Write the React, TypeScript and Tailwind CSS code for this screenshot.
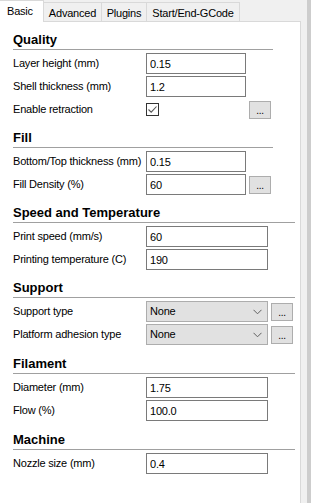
import React from 'react';

type Row =
  | { kind: 'text'; label: string; value: string; wide?: boolean; more?: boolean }
  | { kind: 'check'; label: string; checked: boolean; more?: boolean }
  | { kind: 'select'; label: string; value: string; more?: boolean };

type Section = { title: string; wide: boolean; extra?: boolean; rows: Row[] };

const sections: Section[] = [
  {
    title: 'Quality',
    wide: false,
    rows: [
      { kind: 'text', label: 'Layer height (mm)', value: '0.15' },
      { kind: 'text', label: 'Shell thickness (mm)', value: '1.2' },
      { kind: 'check', label: 'Enable retraction', checked: true, more: true },
    ],
  },
  {
    title: 'Fill',
    wide: false,
    rows: [
      { kind: 'text', label: 'Bottom/Top thickness (mm)', value: '0.15' },
      { kind: 'text', label: 'Fill Density (%)', value: '60', more: true },
    ],
  },
  {
    title: 'Speed and Temperature',
    wide: true,
    rows: [
      { kind: 'text', label: 'Print speed (mm/s)', value: '60', wide: true },
      { kind: 'text', label: 'Printing temperature (C)', value: '190', wide: true },
    ],
  },
  {
    title: 'Support',
    wide: true,
    rows: [
      { kind: 'select', label: 'Support type', value: 'None', more: true },
      { kind: 'select', label: 'Platform adhesion type', value: 'None', more: true },
    ],
  },
  {
    title: 'Filament',
    wide: true,
    extra: true,
    rows: [
      { kind: 'text', label: 'Diameter (mm)', value: '1.75', wide: true },
      { kind: 'text', label: 'Flow (%)', value: '100.0', wide: true },
    ],
  },
  {
    title: 'Machine',
    wide: true,
    extra: true,
    rows: [{ kind: 'text', label: 'Nozzle size (mm)', value: '0.4', wide: true }],
  },
];

const MoreButton = () => (
  <button className="ml-[3px] w-[22px] h-[18px] bg-[#e1e1e1] border border-[#adadad] text-[10px] leading-[12px] pt-[3px] text-black">
    ...
  </button>
);

const Field = ({ row }: { row: Row }) => {
  if (row.kind === 'check') {
    return (
      <div className="flex items-center">
        <div className="w-[100px] flex items-center">
          <div className="w-[13px] h-[13px] border border-[#333333] bg-white flex items-center justify-center">
            {row.checked && (
              <svg width="11" height="11" viewBox="0 0 11 11">
                <path d="M1.5 5.5 L4.2 8.2 L9.5 2.5" fill="none" stroke="#555555" strokeWidth="1.1" />
              </svg>
            )}
          </div>
        </div>
        {row.more && <MoreButton />}
      </div>
    );
  }
  if (row.kind === 'select') {
    return (
      <div className="flex items-center">
        <div className="w-[122px] h-[21px] bg-[#e1e1e1] border border-[#adadad] flex items-center justify-between pl-[3px] pr-[5px]">
          <span>{row.value}</span>
          <svg width="9" height="6" viewBox="0 0 9 6">
            <path d="M0.5 0.8 L4.5 4.8 L8.5 0.8" fill="none" stroke="#606060" strokeWidth="1" />
          </svg>
        </div>
        {row.more && <MoreButton />}
      </div>
    );
  }
  return (
    <div className="flex items-center">
      <input
        readOnly
        value={row.value}
        className={`${row.wide ? 'w-[122px]' : 'w-[100px]'} h-[21px] border border-[#7a7a7a] bg-white px-[3px] text-[11px] text-black outline-none`}
      />
      {row.more && <MoreButton />}
    </div>
  );
};

const tabs = [
  { name: 'Basic', w: 'w-[44px]' },
  { name: 'Advanced', w: 'w-[58px]' },
  { name: 'Plugins', w: 'w-[45px]' },
  { name: 'Start/End-GCode', w: 'w-[93px]' },
];

export default function App() {
  return (
    <div className="w-[311px] h-[503px] bg-[#f0f0f0] flex overflow-hidden font-['Liberation_Sans',Tahoma,sans-serif] text-[11px] text-black tracking-[-0.2px]">
      <div className="w-[301px] flex flex-col">
        <div className="h-[22px] flex items-end border-b border-[#d9d9d9]">
          {tabs.map((t, i) =>
            i === 0 ? (
              <div
                key={t.name}
                className={`${t.w} h-[22px] -mb-px bg-white border-t border-r border-[#d9d9d9] pl-[7px] pt-[3px] leading-[14px] relative z-10`}
              >
                {t.name}
              </div>
            ) : (
              <div
                key={t.name}
                className={`${t.w} h-[20px] -mb-px bg-[#f0f0f0] border-t border-r border-b border-[#d9d9d9] text-center pt-[3px] leading-[14px]`}
              >
                {t.name}
              </div>
            )
          )}
        </div>
        <div className="flex-1 bg-white border-r border-[#d9d9d9] pl-[13px] pt-[10px] flex flex-col gap-[10px]">
          {sections.map((s) => (
            <div key={s.title} className={`flex flex-col ${s.extra ? 'mt-[1px]' : ''}`}>
              <div
                className={`${s.wide ? 'w-[282px]' : 'w-[260px]'} h-[18px] border-b border-[#a0a0a0] text-[13px] font-bold leading-[16px] tracking-normal`}
              >
                {s.title}
              </div>
              <div className="flex flex-col gap-[2px] mt-[3px]">
                {s.rows.map((r) => (
                  <div key={r.label} className="h-[21px] flex items-center">
                    <div className="w-[133px] whitespace-nowrap">{r.label}</div>
                    <Field row={r} />
                  </div>
                ))}
              </div>
            </div>
          ))}
        </div>
      </div>
      <div className="w-[6px]" />
      <div className="w-[4px] bg-[#cdcdcd]" />
    </div>
  );
}
